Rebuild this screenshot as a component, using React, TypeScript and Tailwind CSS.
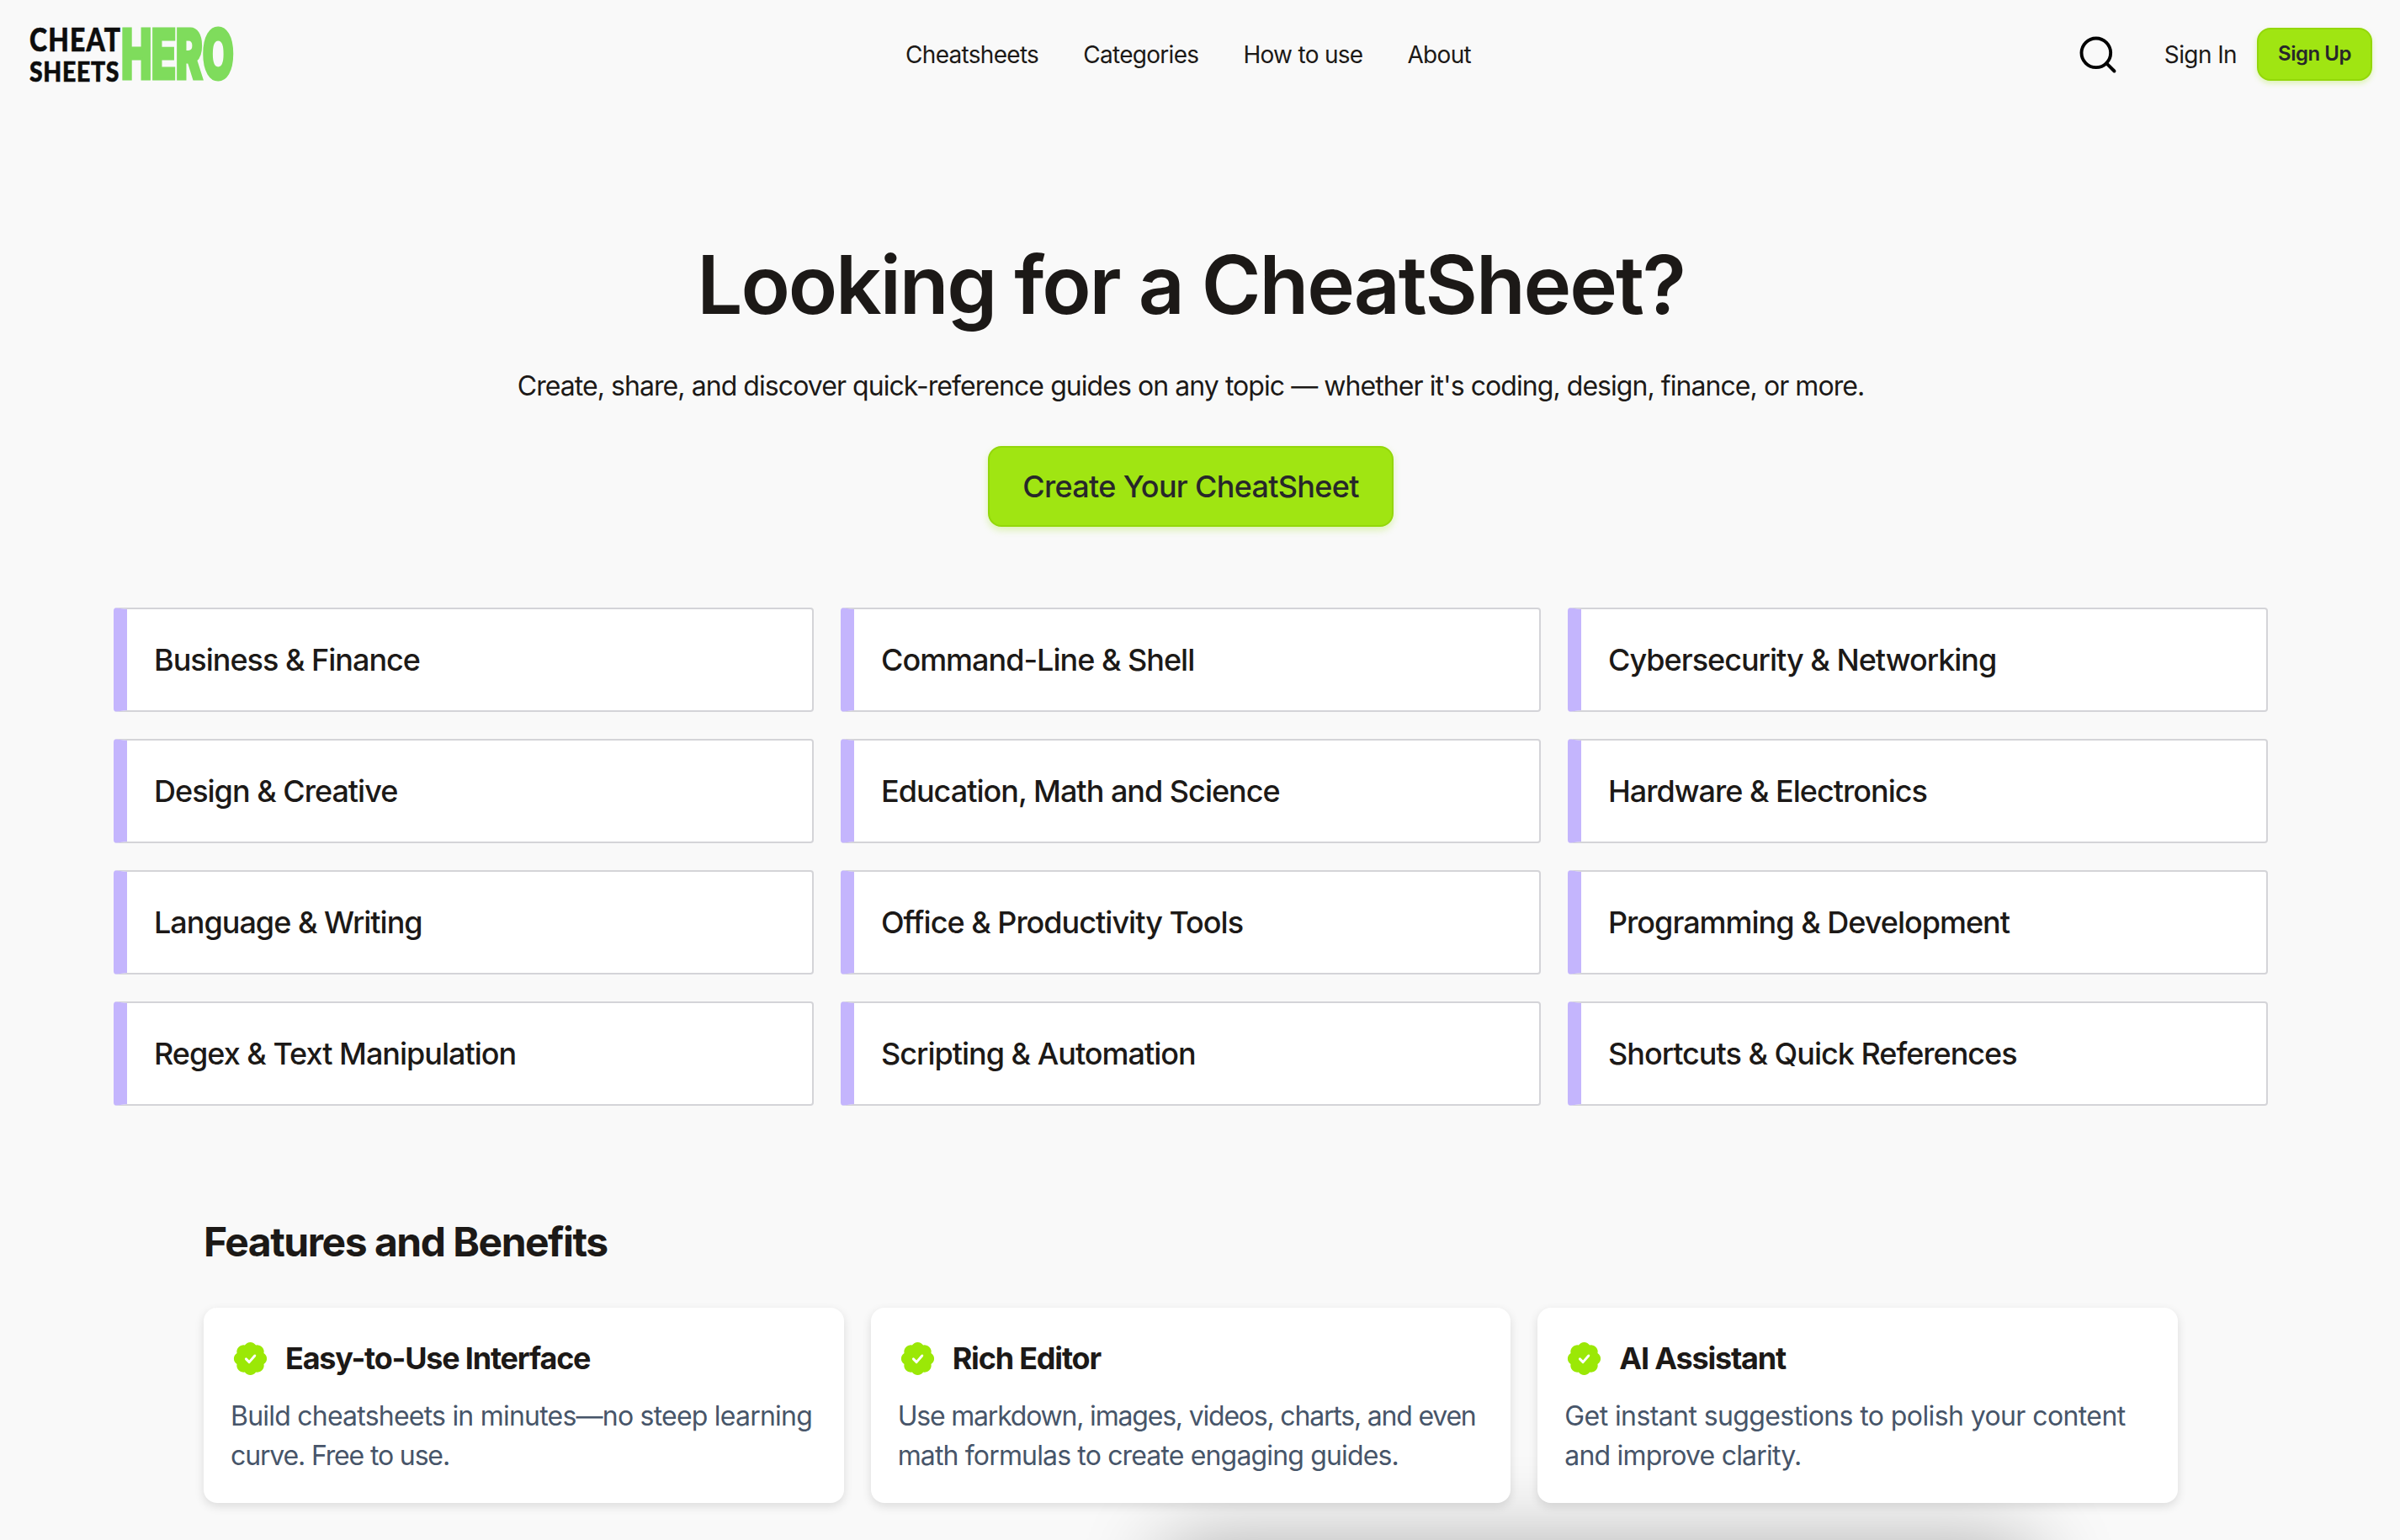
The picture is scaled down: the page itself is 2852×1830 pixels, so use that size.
import React from 'react';
import { Search } from 'lucide-react';

const categories = [
  'Business & Finance',
  'Command-Line & Shell',
  'Cybersecurity & Networking',
  'Design & Creative',
  'Education, Math and Science',
  'Hardware & Electronics',
  'Language & Writing',
  'Office & Productivity Tools',
  'Programming & Development',
  'Regex & Text Manipulation',
  'Scripting & Automation',
  'Shortcuts & Quick References',
];

const features = [
  {
    title: 'Easy-to-Use Interface',
    lines: [
      { text: 'Build cheatsheets in minutes—no steep learning', tracking: 'tracking-[-0.78px]' },
      { text: 'curve. Free to use.', tracking: 'tracking-[-1.15px]' },
    ],
  },
  {
    title: 'Rich Editor',
    lines: [
      { text: 'Use markdown, images, videos, charts, and even', tracking: 'tracking-[-1.2px]' },
      { text: 'math formulas to create engaging guides.', tracking: 'tracking-[-0.85px]' },
    ],
  },
  {
    title: 'AI Assistant',
    lines: [
      { text: 'Get instant suggestions to polish your content', tracking: 'tracking-[-0.6px]' },
      { text: 'and improve clarity.', tracking: 'tracking-[-0.8px]' },
    ],
  },
];

function CheckBadge() {
  return (
    <svg viewBox="0 0 24 24" className="w-[47px] h-[47px] shrink-0">
      <path
        d="M3.85 8.62a4 4 0 0 1 4.78-4.77 4 4 0 0 1 6.74 0 4 4 0 0 1 4.78 4.78 4 4 0 0 1 0 6.74 4 4 0 0 1-4.77 4.78 4 4 0 0 1-6.75 0 4 4 0 0 1-4.78-4.77 4 4 0 0 1 0-6.76Z"
        fill="#9be806"
      />
      <path d="m9.4 12.2 1.9 1.9 3.4-3.9" fill="none" stroke="#fff" strokeWidth="1.5" strokeLinecap="round" strokeLinejoin="round" />
    </svg>
  );
}

function Logo() {
  return (
    <div className="flex items-center">
      <div className="w-[109px] font-['Lato',sans-serif] font-black text-[#0d0d0d] origin-left scale-x-[0.86] [-webkit-text-stroke:0.6px_#0d0d0d]">
        <div className="text-[37px] leading-[38px] tracking-[1.4px] whitespace-nowrap">CHEAT</div>
        <div className="text-[33px] leading-[36px] tracking-[0.8px] whitespace-nowrap">SHEETS</div>
      </div>
      <div className="font-['Inter',sans-serif] font-black text-[#7fdc5c] text-[82px] leading-[64px] h-[64px] w-[132px] origin-left scale-x-[0.59] tracking-[-1px] [-webkit-text-stroke:3px_#7fdc5c]">
        HERO
      </div>
    </div>
  );
}

export default function App() {
  return (
    <div className="h-[1830px] overflow-hidden bg-[#f9f9f9] text-[#1c1917] font-['Inter',sans-serif]">
      <header className="h-[130px] flex items-center justify-between pl-[35px] pr-[33px]">
        <div className="w-[500px]">
          <Logo />
        </div>
        <nav className="flex items-center gap-[53px] text-[28px] tracking-[-0.7px] pr-[30px]">
          <span>Cheatsheets</span>
          <span>Categories</span>
          <span>How to use</span>
          <span>About</span>
        </nav>
        <div className="w-[500px] flex items-center justify-end">
          <Search className="w-[52px] h-[52px] text-black mr-[53px]" strokeWidth={1.8} />
          <span className="text-[28px] tracking-[-0.6px] mr-[24px]">Sign In</span>
          <button className="w-[137px] h-[63px] -mt-[2px] rounded-[16px] bg-[#a0e512] border-2 border-[#93d70a] text-[24px] font-semibold tracking-[-0.5px] text-[#27272a] shadow-[0_3px_6px_rgba(155,230,20,0.3)]">
            Sign Up
          </button>
        </div>
      </header>

      <section className="w-[2830px] flex flex-col items-center pt-[140px]">
        <h1 className="text-[96px] leading-[136px] font-semibold tracking-[-2.1px] h-[136px]">
          Looking for a CheatSheet?
        </h1>
        <p className="mt-[29px] text-[32px] leading-[48px] tracking-[-0.94px]">
          Create, share, and discover quick-reference guides on any topic — whether it's coding, design, finance, or more.
        </p>
        <button className="mt-[47px] w-[482px] h-[96px] rounded-[16px] bg-[#a0e512] border-2 border-[#93d70a] text-[36px] font-[550] tracking-[-0.7px] text-[#27272a] shadow-[0_4px_8px_rgba(155,230,20,0.3)]">
          Create Your CheatSheet
        </button>
      </section>

      <section className="mt-[96px] ml-[135px] w-[2560px] grid grid-cols-3 gap-[32px]">
        {categories.map((c) => (
          <div
            key={c}
            className="h-[124px] flex items-center bg-white border-2 border-[#d4d4d8] border-l-[16px] border-l-[#c4b5fd] rounded-[4px] pl-[32px] text-[36px] font-[450] tracking-[-1px]"
          >
            {c}
          </div>
        ))}
      </section>

      <section className="mt-[126px] ml-[242px]">
        <h2 className="text-[48px] leading-[72px] font-bold tracking-[-1.5px]">Features and Benefits</h2>
        <div className="mt-[42px] grid grid-cols-3 gap-[32px] w-[2346px]">
          {features.map((f) => (
            <div key={f.title} className="h-[232px] bg-white rounded-[16px] px-[32px] pt-[36px] shadow-[0_4px_12px_rgba(0,0,0,0.12)]">
              <div className="flex items-center gap-[18px] h-[48px]">
                <CheckBadge />
                <h3 className="text-[36px] font-bold tracking-[-1.2px]">{f.title}</h3>
              </div>
              <p className="mt-[21px] text-[32px] leading-[47px] text-[#475569]">
                {f.lines.map((l) => (
                  <span key={l.text} className={`block whitespace-nowrap ${l.tracking}`}>{l.text}</span>
                ))}
              </p>
            </div>
          ))}
        </div>
      </section>

      <div className="mt-[50px] ml-[1385px] w-[1030px] h-[200px] bg-white rounded-[16px] shadow-[0_0_100px_rgba(0,0,0,0.32)]" />
    </div>
  );
}
